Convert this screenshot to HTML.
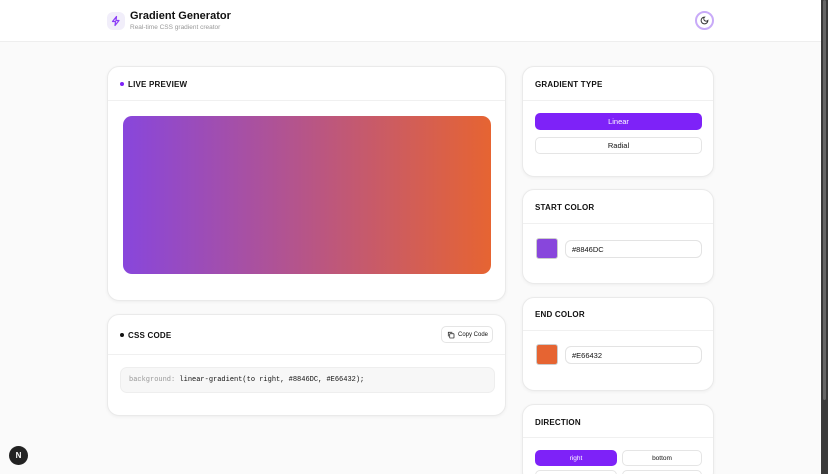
<!DOCTYPE html>
<html style="overflow:hidden;height:474px"><head><style>
*{box-sizing:border-box;margin:0;padding:0}
body{width:828px;height:474px;overflow:hidden;background:#fafafa;font-family:"Liberation Sans",sans-serif;color:#111;position:relative}
.hdr{position:absolute;left:0;top:0;width:821px;height:42px;background:#fff;border-bottom:1px solid #eee}
.card{position:absolute;background:#fff;border:1px solid #eaeaea;border-radius:12px;box-shadow:0 1px 3px rgba(0,0,0,.05);overflow:hidden}
.ch{position:absolute;left:0;right:0;top:0;border-bottom:1px solid #f0f0f0;font-size:8px;font-weight:bold;letter-spacing:.2px}
.ch span{position:absolute;left:12px}
.btn{position:absolute;border-radius:5px;font-size:7.5px;display:flex;align-items:center;justify-content:center;border:1px solid #e5e5e5;background:#fff}
.btn.on{background:#7e22f8;color:#fff;border-color:#7e22f8}
.inp{position:absolute;border:1px solid #e3e3e3;border-radius:6px;font-size:7.5px;padding-left:6px;display:flex;align-items:center;background:#fff}
</style></head><body>
<div class="hdr">
 <div style="position:absolute;left:107px;top:12px;width:18px;height:18px;border-radius:6px;background:#f1eefa"></div>
 <svg style="position:absolute;left:110px;top:15px" width="12" height="12" viewBox="0 0 24 24" fill="none" stroke="#8b3cf7" stroke-width="2.4" stroke-linecap="round" stroke-linejoin="round"><path d="M13 3L5 13h6l-1 8 8-10h-6z"/></svg>
 <div style="position:absolute;left:130px;top:10px;font-size:11px;font-weight:bold">Gradient Generator</div>
 <div style="position:absolute;left:130px;top:24px;font-size:6.5px;color:#999">Real-time CSS gradient creator</div>
 <div style="position:absolute;left:695px;top:11px;width:19px;height:19px;border-radius:50%;border:2px solid #c8aaf8;background:#fff"></div>
 <svg style="position:absolute;left:700px;top:16px" width="9" height="9" viewBox="0 0 24 24" fill="none" stroke="#333" stroke-width="2.6"><path d="M12 3a6 6 0 0 0 9 9 9 9 0 1 1-9-9z"/></svg>
</div>
<div style="position:absolute;left:821px;top:0;width:7px;height:474px;background:#3a3a3a"></div>
<div style="position:absolute;left:823px;top:0;width:3px;height:400px;background:#666;border-radius:2px"></div>

<div class="card" style="left:107px;top:66px;width:399px;height:235px">
 <div class="ch" style="height:34px"><span style="top:13px"><b style="display:inline-block;width:4px;height:4px;border-radius:50%;background:#7e22f8;margin-right:4px;vertical-align:1px"></b>LIVE PREVIEW</span></div>
 <div style="position:absolute;left:15px;top:49px;width:368px;height:158px;border-radius:9px;background:linear-gradient(to right,#8846DC,#E66432)"></div>
</div>
<div class="card" style="left:107px;top:314px;width:399px;height:102px">
 <div class="ch" style="height:40px"><span style="top:16px"><b style="display:inline-block;width:4px;height:4px;border-radius:50%;background:#111;margin-right:4px;vertical-align:1px"></b>CSS CODE</span></div>
 <div style="position:absolute;right:12px;top:11px;width:52px;height:17px;border:1px solid #e5e5e5;border-radius:5px;font-size:6px;display:flex;align-items:center;padding-left:16px">Copy Code
  <svg style="position:absolute;left:5px;top:4px" width="8" height="8" viewBox="0 0 24 24" fill="none" stroke="#333" stroke-width="2.5"><rect x="8" y="8" width="13" height="13" rx="2"/><path d="M4 16V4h12"/></svg></div>
 <div style="position:absolute;left:12px;top:52px;width:375px;height:26px;border:1px solid #eee;border-radius:7px;background:#f7f7f7;font-family:'Liberation Mono',monospace;font-size:7px;line-height:24px;padding-left:8px"><span style="color:#999">background:</span> linear-gradient(to right, #8846DC, #E66432);</div>
</div>

<div class="card" style="left:522px;top:66px;width:192px;height:111px">
 <div class="ch" style="height:34px"><span style="top:13px">GRADIENT TYPE</span></div>
 <div class="btn on" style="left:12px;top:46px;width:167px;height:17px">Linear</div>
 <div class="btn" style="left:12px;top:70px;width:167px;height:17px">Radial</div>
</div>
<div class="card" style="left:522px;top:189px;width:192px;height:95px">
 <div class="ch" style="height:34px"><span style="top:13px">START COLOR</span></div>
 <div style="position:absolute;left:13px;top:48px;width:22px;height:21px;border-radius:3px;background:#8846DC;border:1px solid #ccc"></div>
 <div class="inp" style="left:42px;top:50px;width:137px;height:18px">#8846DC</div>
</div>
<div class="card" style="left:522px;top:297px;width:192px;height:94px">
 <div class="ch" style="height:33px"><span style="top:12px">END COLOR</span></div>
 <div style="position:absolute;left:13px;top:46px;width:22px;height:21px;border-radius:3px;background:#E66432;border:1px solid #ccc"></div>
 <div class="inp" style="left:42px;top:48px;width:137px;height:18px">#E66432</div>
</div>
<div class="card" style="left:522px;top:404px;width:192px;height:80px">
 <div class="ch" style="height:33px"><span style="top:13px">DIRECTION</span></div>
 <div class="btn on" style="left:12px;top:45px;width:82px;height:16px;font-size:6.5px">right</div>
 <div class="btn" style="left:99px;top:45px;width:80px;height:16px;font-size:6.5px">bottom</div>
 <div class="btn" style="left:12px;top:65px;width:82px;height:16px"></div>
 <div class="btn" style="left:99px;top:65px;width:80px;height:16px"></div>
</div>

<div style="position:absolute;left:9px;top:446px;width:19px;height:19px;border-radius:50%;background:#222;color:#fff;font-size:8px;text-align:center;line-height:19px;font-weight:bold">N</div>
</body></html>
